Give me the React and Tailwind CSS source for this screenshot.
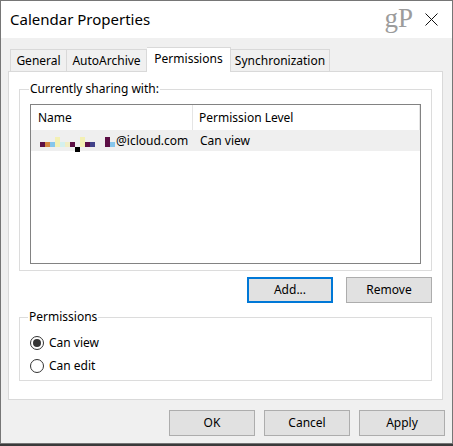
import React from "react";

const blocks = [
  "h-[5px] bg-[#5c0f45]",
  "h-[5px] bg-[#d4873f]",
  "h-[5px] bg-[#86c6ec]",
  "h-[10px] bg-[#f3f0b4]",
  "h-[5px] bg-[#d4f0ef]",
  "h-[5px] bg-[#f1edc6]",
  "h-[5px] bg-[#5c0f45]",
];

function Button({ children, primary }) {
  return (
    <button
      className={
        primary
          ? "w-[86px] h-[26px] bg-[#e1e1e1] border-2 border-[#0078d7] text-[12px] text-black"
          : "w-[86px] h-[26px] bg-[#e1e1e1] border border-[#adadad] text-[12px] text-black"
      }
    >
      {children}
    </button>
  );
}

function Radio({ checked, label }) {
  return (
    <label className="flex items-center gap-[5px] h-[23px]">
      <span className="w-[14px] h-[14px] rounded-full border border-[#333] bg-white flex items-center justify-center">
        {checked && <span className="w-[8px] h-[8px] rounded-full bg-[#333]" />}
      </span>
      <span>{label}</span>
    </label>
  );
}

export default function App() {
  return (
    <div className="w-[453px] h-[446px] bg-[#3a3a3a] font-['Noto_Sans',sans-serif] text-[12px] text-black">
      <div className="w-[453px] h-[444px] border border-[#767676] bg-[#f0f0f0] flex flex-col">
        {/* title bar */}
        <div className="h-[37px] bg-white flex items-center pl-[9px] pr-[14px]">
          <span className="text-[15px] flex-1">Calendar Properties</span>
          <span className="font-['Liberation_Serif',serif] text-[27px] text-[#9c9c9c] leading-none mr-[12px] -mt-[2px]">gP</span>
          <svg width="13" height="13" viewBox="0 0 13 13">
            <path d="M0.5 0.5 L12.5 12.5 M12.5 0.5 L0.5 12.5" stroke="#111" strokeWidth="1" />
          </svg>
        </div>

        {/* tabs */}
        <div className="flex items-end pl-[9px] pt-[8px] h-[33px]">
          <div className="w-[57px] h-[22px] border border-b-0 border-[#d9d9d9] flex items-center justify-center">General</div>
          <div className="w-[80px] h-[22px] border border-b-0 border-l-0 border-[#d9d9d9] flex items-center justify-center">AutoArchive</div>
          <div className="w-[84px] h-[25px] border border-b-0 border-l-0 border-[#d9d9d9] bg-white flex items-start pt-[2px] justify-center relative z-10 -mb-px">Permissions</div>
          <div className="w-[99px] h-[22px] border border-b-0 border-l-0 border-[#d9d9d9] flex items-center justify-center">Synchronization</div>
        </div>

        {/* panel */}
        <div className="ml-[7px] w-[435px] h-[329px] bg-white border border-[#d9d9d9] px-[10px] pt-[8px]">
          <fieldset className="border border-[#dcdcdc] px-[10px] pb-[6px] pt-[6px]">
            <legend className="px-[1px] -ml-[1px]">Currently sharing with:</legend>
            <div className="h-[160px] border border-[#828282] flex flex-col">
              <div className="h-[25px] flex items-center">
                <div className="w-[162px] h-full pl-[7px] flex items-center border-r border-[#e5e5e5]">Name</div>
                <div className="flex-1 h-full pl-[6px] flex items-center border-r border-[#e5e5e5]">Permission Level</div>
              </div>
              <div className="h-[21px] bg-[#efefef] flex items-center">
                <div className="w-[162px] pl-[9px] flex items-center">
                  <div className="flex items-end h-[12px]">
                    {blocks.map((b, i) => (
                      <span key={i} className={"w-[5px] " + b} />
                    ))}
                    <span className="w-[5px] h-[5px] bg-black -mb-[5px]" />
                    <span className="w-[5px] h-[10px] bg-[#f3f0b4]" />
                    <span className="w-[5px] h-[5px] bg-[#5c0f45]" />
                    <span className="w-[5px] h-[5px] bg-[#42428a]" />
                    <span className="w-[10px] h-[5px]" />
                    <span className="w-[5px] h-[10px] bg-[#5c0f45]" />
                    <span className="w-[5px] h-[5px] bg-[#86c6ec]" />
                  </div>
                  <span className="ml-[1px]">@icloud.com</span>
                </div>
                <div className="pl-[7px]">Can view</div>
              </div>
            </div>
          </fieldset>

          <div className="flex justify-end gap-[13px] pt-[6px]">
            <Button primary>Add...</Button>
            <Button>Remove</Button>
          </div>

          <fieldset className="mt-[5px] border border-[#dcdcdc] px-[10px] pt-[5px] pb-[3px]">
            <legend className="px-[1px] -ml-[2px]">Permissions</legend>
            <Radio checked label="Can view" />
            <Radio label="Can edit" />
          </fieldset>
        </div>

        {/* footer buttons */}
        <div className="flex justify-end gap-[9px] pr-[7px] pt-[10px]">
          <Button>OK</Button>
          <Button>Cancel</Button>
          <Button>Apply</Button>
        </div>
      </div>
    </div>
  );
}
